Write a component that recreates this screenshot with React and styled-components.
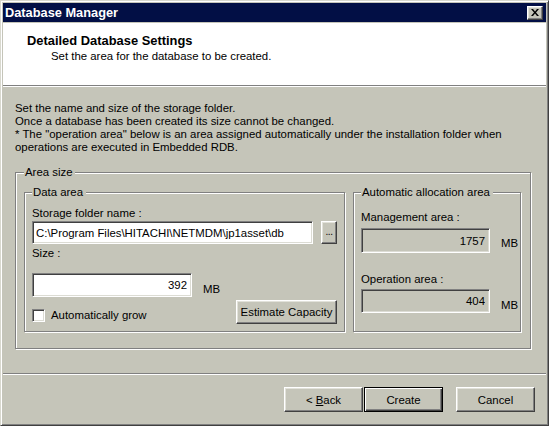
import React from "react";
import styled, { createGlobalStyle, css } from "styled-components";

const BG = "#c5c5b9";

const GlobalStyle = createGlobalStyle`
  html, body { margin: 0; padding: 0; background: ${BG}; }
  body { font-family: "Liberation Sans", Arial, sans-serif; font-size: 11.4px; color: #000; }
  * { box-sizing: border-box; }
`;

const raised = css`
  border: 1px solid;
  border-color: #fff #404040 #404040 #fff;
  box-shadow: inset -1px -1px 0 #808080, inset 1px 1px 0 #e2e2da;
  background: ${BG};
`;

const sunken = css`
  border: 1px solid;
  border-color: #808080 #fff #fff #808080;
  box-shadow: inset 1px 1px 0 #404040, inset -1px -1px 0 #dcdcd4;
`;

const Window = styled.div`
  width: 549px;
  height: 426px;
  display: flex;
  flex-direction: column;
  background: ${BG};
  border: 1px solid;
  border-color: #d8d8ce #404040 #404040 #d8d8ce;
  box-shadow: inset 1px 1px 0 #fff, inset -1px -1px 0 #808080;
  padding: 2px;
`;

const TitleBar = styled.div`
  height: 19px;
  flex: none;
  margin-bottom: 1px;
  background: #020f45;
  color: #fff;
  display: flex;
  align-items: center;
  justify-content: space-between;
  padding: 0 3px 0 2px;
  font-weight: bold;
  font-size: 12.8px;
`;

const CloseButton = styled.div`
  ${raised};
  width: 16px;
  height: 14px;
  display: flex;
  align-items: center;
  justify-content: center;
  padding-bottom: 1px;
`;

const Header = styled.div`
  height: 62px;
  flex: none;
  background: #fff;
  padding: 11px 0 0 24px;
`;

const HeaderTitle = styled.div`
  font-weight: bold;
  font-size: 12.9px;
  line-height: 13px;
`;

const HeaderSub = styled.div`
  line-height: 13px;
  margin-top: 3px;
  padding-left: 24px;
`;

const Separator = styled.div`
  height: 2px;
  flex: none;
  border-top: 1px solid #808080;
  border-bottom: 1px solid #fff;
`;

const Body = styled.div`
  flex: 1;
  padding: 15px 15px 0 12px;
`;

const Para = styled.div`
  line-height: 13px;
  white-space: nowrap;
`;

const Group = styled.fieldset`
  margin: ${(p) => p.$margin || "0"};
  min-width: 0;
  border: 1px solid #808080;
  box-shadow: inset 1px 1px 0 #fff, 1px 1px 0 #fff;
  padding: ${(p) => p.$pad};
`;

const Legend = styled.legend`
  padding: 0 3px 0 1px;
  line-height: 13px;
  background: ${BG};
`;

const Columns = styled.div`
  display: grid;
  grid-template-columns: 321px 168px;
  gap: 8px;
`;

const Label = styled.div`
  line-height: 13px;
  margin-top: ${(p) => p.$mt || 0}px;
`;

const Row = styled.div`
  display: flex;
  align-items: ${(p) => p.$align || "flex-start"};
  justify-content: ${(p) => p.$justify || "flex-start"};
  gap: ${(p) => p.$gap || 0}px;
  margin-top: ${(p) => p.$mt || 0}px;
`;

const Field = styled.input`
  ${sunken};
  width: ${(p) => p.$w}px;
  height: ${(p) => p.$h}px;
  background: ${(p) => (p.$disabled ? BG : "#fff")};
  font-family: inherit;
  font-size: 11.4px;
  color: #000;
  padding: 0 ${(p) => (p.$right ? 4 : 2)}px 0 3px;
  text-align: ${(p) => (p.$right ? "right" : "left")};
  outline: none;
  margin: 0;
`;

const Unit = styled.span`
  line-height: 13px;
  margin-left: 11px;
  margin-bottom: ${(p) => p.$mb || 2}px;
`;

const Button = styled.button`
  ${raised};
  width: ${(p) => p.$w}px;
  height: ${(p) => p.$h}px;
  font-family: inherit;
  font-size: 11.4px;
  color: #000;
  padding: 0;
  margin: 0;
  display: flex;
  align-items: center;
  justify-content: center;
  ${(p) =>
    p.$default &&
    css`
      border: 1px solid #000;
      box-shadow: inset 1px 1px 0 #fff, inset -1px -1px 0 #404040,
        inset -2px -2px 0 #808080;
    `}
`;

const DotsButton = styled(Button)`
  align-items: flex-end;
  padding-bottom: 6px;
  font-size: 10px;
  letter-spacing: -0.5px;
`;

const CheckRow = styled.label`
  display: flex;
  align-items: center;
  gap: 6px;
  margin-bottom: 2px;
  line-height: 13px;
`;

const CheckBox = styled.span`
  ${sunken};
  width: 13px;
  height: 13px;
  background: #fff;
  display: inline-block;
`;

const Footer = styled.div`
  height: 48px;
  flex: none;
  display: flex;
  justify-content: flex-end;
  align-items: flex-start;
  padding: 12px 11px 0 0;
`;

const ButtonGroup = styled.div`
  display: flex;
  gap: 1px;
  margin-right: 13px;
`;

const Underline = styled.span`
  text-decoration: underline;
`;

export default function App() {
  return (
    <>
      <GlobalStyle />
      <Window>
        <TitleBar>
          <span>Database Manager</span>
          <CloseButton>
            <svg width="8" height="7" viewBox="0 0 8 7">
              <path
                d="M0 0h2l2 2.4L6 0h2L5 3.5 8 7H6L4 4.6 2 7H0l3-3.5z"
                fill="#000"
              />
            </svg>
          </CloseButton>
        </TitleBar>
        <Header>
          <HeaderTitle>Detailed Database Settings</HeaderTitle>
          <HeaderSub>Set the area for the database to be created.</HeaderSub>
        </Header>
        <Separator />
        <Body>
          <Para>Set the name and size of the storage folder.</Para>
          <Para>Once a database has been created its size cannot be changed.</Para>
          <Para>
            * The "operation area" below is an area assigned automatically under
            the installation folder when
          </Para>
          <Para>operations are executed in Embedded RDB.</Para>
          <Group $margin="12px 0 0 0" $pad="7px 8px 16px 8px">
            <Legend>Area size</Legend>
            <Columns>
              <Group $pad="8px 7px 7px 7px">
                <Legend>Data area</Legend>
                <Label>Storage folder name :</Label>
                <Row $gap={8} $mt={1}>
                  <Field
                    $w={281}
                    $h={23}
                    readOnly
                    value="C:\Program Files\HITACHI\NETMDM\jp1asset\db"
                  />
                  <DotsButton $w={16} $h={23}>...</DotsButton>
                </Row>
                <Label $mt={3}>Size :</Label>
                <Row $mt={13} $align="flex-end">
                  <Field $w={160} $h={24} $right readOnly value="392" />
                  <Unit $mb={1}>MB</Unit>
                </Row>
                <Row $mt={3} $align="flex-end" $justify="space-between">
                  <CheckRow>
                    <CheckBox />
                    Automatically grow
                  </CheckRow>
                  <Button $w={101} $h={24}>Estimate Capacity</Button>
                </Row>
              </Group>
              <Group $pad="12px 7px 7px 7px">
                <Legend>Automatic allocation area</Legend>
                <Label>Management area :</Label>
                <Row $mt={4} $align="flex-end">
                  <Field $w={129} $h={25} $right $disabled readOnly value="1757" />
                  <Unit $mb={3}>MB</Unit>
                </Row>
                <Label $mt={20}>Operation area :</Label>
                <Row $mt={3} $align="flex-end">
                  <Field $w={129} $h={24} $right $disabled readOnly value="404" />
                  <Unit $mb={1}>MB</Unit>
                </Row>
              </Group>
            </Columns>
          </Group>
        </Body>
        <Separator />
        <Footer>
          <ButtonGroup>
            <Button $w={79} $h={25}>
              &lt;&nbsp;<Underline>B</Underline>ack
            </Button>
            <Button $w={79} $h={25} $default>
              Create
            </Button>
          </ButtonGroup>
          <Button $w={79} $h={25}>Cancel</Button>
        </Footer>
      </Window>
    </>
  );
}
